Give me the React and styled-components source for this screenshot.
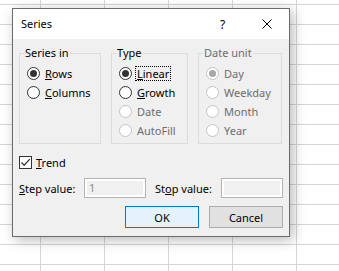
import React from "react";
import styled, { createGlobalStyle } from "styled-components";

const GlobalStyle = createGlobalStyle`
  html, body {
    margin: 0;
    padding: 0;
  }
  body {
    font-family: "Noto Sans", "Open Sans", sans-serif;
    font-size: 11px;
    color: #000;
  }
`;

const Sheet = styled.div`
  position: relative;
  width: 339px;
  height: 271px;
  overflow: hidden;
  background-color: #fff;
  background-image: linear-gradient(to right, #d6d6d6 1px, transparent 1px),
    linear-gradient(to bottom, #d6d6d6 1px, transparent 1px);
  background-size: 64px 100%, 100% 20px;
  background-position: 40px 0, 0 4px;
`;

const Dialog = styled.div`
  position: absolute;
  left: 12px;
  top: 8px;
  width: 278px;
  height: 229px;
  box-sizing: border-box;
  border: 1px solid #6b6b6b;
  background: #f0f0f0;
  box-shadow: 3px 3px 12px rgba(0, 0, 0, 0.28);
  display: flex;
  flex-direction: column;
`;

const TitleBar = styled.div`
  height: 30px;
  flex: none;
  display: flex;
  align-items: center;
  background: #fff;
`;

const Title = styled.span`
  flex: 1;
  padding-left: 8px;
  line-height: 16px;
`;

const TitleButton = styled.span`
  width: ${(p) => p.$width}px;
  height: 30px;
  display: flex;
  align-items: center;
  justify-content: center;
  font-size: 12px;
`;

const Body = styled.div`
  flex: 1;
  padding: 7px 6px 8px;
  display: flex;
  flex-direction: column;
`;

const Groups = styled.div`
  display: grid;
  grid-template-columns: 82px 77px 84px;
  column-gap: 10px;
  height: 98px;
`;

const Group = styled.fieldset`
  margin: 0;
  padding: 0 0 0 4px;
  min-width: 0;
  height: 98px;
  box-sizing: border-box;
  border: 1px solid #dcdcdc;
`;

const Legend = styled.legend`
  padding: 0 1px;
  line-height: 14px;
  color: ${(p) => (p.$disabled ? "#6d6d6d" : "#000")};
`;

const OptionList = styled.div`
  display: flex;
  flex-direction: column;
  padding: 4px 0 0 3px;
`;

const Option = styled.div`
  height: 19px;
  display: flex;
  align-items: center;
  gap: 5px;
  color: ${(p) => (p.$disabled ? "#6d6d6d" : "#000")};
`;

const RadioCircle = styled.span`
  position: relative;
  flex: none;
  width: 13px;
  height: 13px;
  box-sizing: border-box;
  border-radius: 50%;
  border: 1px solid ${(p) => (p.$disabled ? "#c4c4c4" : "#333")};
  background: #fff;

  &::after {
    content: "";
    display: ${(p) => (p.$checked ? "block" : "none")};
    position: absolute;
    left: 2px;
    top: 2px;
    width: 7px;
    height: 7px;
    border-radius: 50%;
    background: ${(p) => (p.$disabled ? "#a8a8a8" : "#333")};
  }
`;

const OptionText = styled.span`
  line-height: 13px;
  padding: 0 1px;
  margin-left: -1px;
  outline: ${(p) => (p.$focused ? "1px dotted #000" : "none")};
`;

const CheckRow = styled.div`
  height: 16px;
  margin-top: 10px;
  display: flex;
  align-items: center;
  gap: 4px;
`;

const CheckBox = styled.span`
  flex: none;
  width: 13px;
  height: 13px;
  box-sizing: border-box;
  border: 1px solid #333;
  background: #fff;
  display: flex;
  align-items: center;
  justify-content: center;
`;

const ValueRow = styled.div`
  height: 20px;
  margin-top: 8px;
  display: flex;
  align-items: center;
`;

const FieldLabel = styled.span`
  width: ${(p) => p.$width}px;
  margin-left: ${(p) => p.$gap || 0}px;
  flex: none;
`;

const TextBox = styled.div`
  width: 62px;
  height: 20px;
  flex: none;
  box-sizing: border-box;
  border: 1px solid #b4b4b4;
  background: #f0f0f0;
  box-shadow: inset 0 0 0 2px #fff;
  padding-left: 4px;
  line-height: 18px;
  color: #8a8a8a;
`;

const ButtonRow = styled.div`
  margin-top: 8px;
  display: flex;
  justify-content: flex-end;
  gap: 10px;
`;

const Button = styled.button`
  width: 74px;
  height: 22px;
  box-sizing: border-box;
  margin: 0;
  padding: 0;
  font: inherit;
  color: #000;
  border: 1px solid ${(p) => (p.$primary ? "#0078d7" : "#adadad")};
  background: ${(p) => (p.$primary ? "#e5f1fb" : "#e1e1e1")};
`;

const Radio = ({ checked, disabled, focused, children }) => (
  <Option $disabled={disabled}>
    <RadioCircle $checked={checked} $disabled={disabled} />
    <OptionText $focused={focused}>{children}</OptionText>
  </Option>
);

const App = () => (
  <>
    <GlobalStyle />
    <Sheet>
      <Dialog>
        <TitleBar>
          <Title>Series</Title>
          <TitleButton $width={45}>?</TitleButton>
          <TitleButton $width={44}>
            <svg width="10" height="10" viewBox="0 0 10 10">
              <path d="M0.5 0.5 L9.5 9.5 M9.5 0.5 L0.5 9.5" stroke="#000" strokeWidth="1" fill="none" />
            </svg>
          </TitleButton>
        </TitleBar>
        <Body>
          <Groups>
            <Group>
              <Legend>Series in</Legend>
              <OptionList>
                <Radio checked>
                  <u>R</u>ows
                </Radio>
                <Radio>
                  <u>C</u>olumns
                </Radio>
              </OptionList>
            </Group>
            <Group>
              <Legend>Type</Legend>
              <OptionList>
                <Radio checked focused>
                  <u>L</u>inear
                </Radio>
                <Radio>
                  <u>G</u>rowth
                </Radio>
                <Radio disabled>Date</Radio>
                <Radio disabled>AutoFill</Radio>
              </OptionList>
            </Group>
            <Group>
              <Legend $disabled>Date unit</Legend>
              <OptionList>
                <Radio checked disabled>
                  Day
                </Radio>
                <Radio disabled>Weekday</Radio>
                <Radio disabled>Month</Radio>
                <Radio disabled>Year</Radio>
              </OptionList>
            </Group>
          </Groups>
          <CheckRow>
            <CheckBox>
              <svg width="11" height="11" viewBox="0 0 11 11">
                <path d="M1.5 5.5 L4.2 8.2 L9.8 2.2" stroke="#222" strokeWidth="1.1" fill="none" />
              </svg>
            </CheckBox>
            <span>
              <u>T</u>rend
            </span>
          </CheckRow>
          <ValueRow>
            <FieldLabel $width={65}>
              <u>S</u>tep value:
            </FieldLabel>
            <TextBox>1</TextBox>
            <FieldLabel $width={66} $gap={9}>
              St<u>o</u>p value:
            </FieldLabel>
            <TextBox />
          </ValueRow>
          <ButtonRow>
            <Button $primary>OK</Button>
            <Button>Cancel</Button>
          </ButtonRow>
        </Body>
      </Dialog>
    </Sheet>
  </>
);

export default App;
